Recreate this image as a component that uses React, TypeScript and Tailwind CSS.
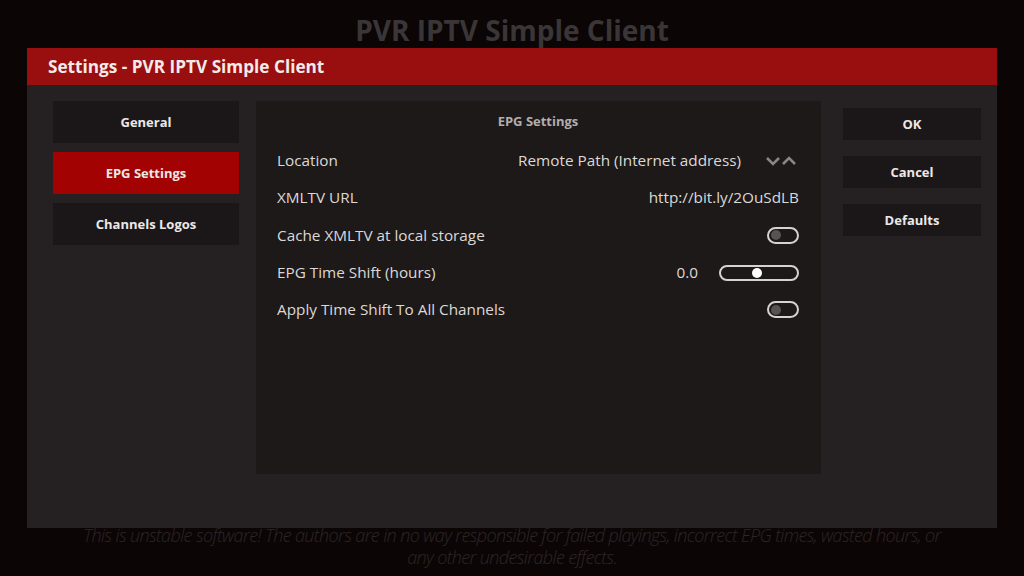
import { useState } from 'react'

type Row = {
  label: string
  kind: 'select' | 'text' | 'toggle' | 'slider'
  value?: string
  on?: boolean
}

const categories = ['General', 'EPG Settings', 'Channels Logos']

const rows: Row[] = [
  { label: 'Location', kind: 'select', value: 'Remote Path (Internet address)' },
  { label: 'XMLTV URL', kind: 'text', value: 'http://bit.ly/2OuSdLB' },
  { label: 'Cache XMLTV at local storage', kind: 'toggle', on: false },
  { label: 'EPG Time Shift (hours)', kind: 'slider', value: '0.0' },
  { label: 'Apply Time Shift To All Channels', kind: 'toggle', on: false },
]

function Toggle({ on }: { on?: boolean }) {
  return (
    <div className="flex h-[17px] w-[32px] items-center rounded-full border-2 border-[#d6d2d2] px-[2px]">
      <div className={`h-[10px] w-[10px] rounded-full ${on ? 'ml-auto bg-white' : 'bg-[#575253]'}`} />
    </div>
  )
}

function Slider() {
  return (
    <div className="flex h-[16px] w-[80px] items-center rounded-full border-2 border-[#d6d2d2]">
      <div className="ml-[31px] h-[10px] w-[10px] rounded-full bg-white" />
    </div>
  )
}

function Spinner() {
  // down / up arrows next to a select value
  return (
    <svg width="34" height="12" viewBox="0 0 34 12" className="ml-[24px]">
      <path d="M2 3 L8 9 L14 3" fill="none" stroke="#8a8586" strokeWidth="2.6" strokeLinejoin="miter" />
      <path d="M18 9 L24 3 L30 9" fill="none" stroke="#8a8586" strokeWidth="2.6" strokeLinejoin="miter" />
    </svg>
  )
}

export default function App() {
  const [active, setActive] = useState(1)

  return (
    <div
      className="flex h-[576px] w-[1024px] flex-col items-center overflow-hidden bg-[#0b0506]"
      style={{ fontFamily: '"Open Sans", "Noto Sans", sans-serif' }}
    >
      <h1 className="flex h-[48px] items-center pt-[12px] text-[28px] font-bold text-[#3a3637]">
        PVR IPTV Simple Client
      </h1>

      <div className="w-[970px]">
        {/* dialog header */}
        <div className="flex h-[37px] items-center bg-[#990e0e] pl-[21px] text-[17.2px] font-bold text-[#f3eaea]">
          Settings - PVR IPTV Simple Client
        </div>

        {/* dialog body */}
        <div className="flex h-[443px] gap-[17px] bg-[#252122] pl-[26px] pr-[16px] pt-[16px]">
          <div className="flex w-[186px] flex-col gap-[9px]">
            {categories.map((c, i) => (
              <button
                key={c}
                onClick={() => setActive(i)}
                className={`flex h-[42px] items-center justify-center pt-[2px] text-[13px] font-bold text-[#ece8e8] ${
                  i === active ? 'bg-[#a20202]' : 'bg-[#1b1718]'
                }`}
              >
                {c}
              </button>
            ))}
          </div>

          <div className="flex h-[373px] w-[565px] flex-col bg-[#1d1919] px-[21px] pr-[22px]">
            <div className="flex h-[41px] items-center justify-center pt-[1px] text-[13px] font-bold text-[#b3adae]">
              EPG Settings
            </div>
            <div className="flex flex-col">
              {rows.map((r) => (
                <div key={r.label} className="flex h-[37.3px] items-center text-[15.3px] text-[#dcd8d8]">
                  <span>{r.label}</span>
                  <div className="ml-auto flex items-center">
                    {r.kind === 'select' && (
                      <>
                        <span>{r.value}</span>
                        <Spinner />
                      </>
                    )}
                    {r.kind === 'text' && <span>{r.value}</span>}
                    {r.kind === 'toggle' && <Toggle on={r.on} />}
                    {r.kind === 'slider' && (
                      <>
                        <span className="mr-[21px]">{r.value}</span>
                        <Slider />
                      </>
                    )}
                  </div>
                </div>
              ))}
            </div>
          </div>

          <div className="ml-[5px] flex w-[138px] flex-col gap-[16px] pt-[7px]">
            {['OK', 'Cancel', 'Defaults'].map((b) => (
              <button
                key={b}
                className="flex h-[32px] items-center justify-center bg-[#1b1718] pt-[2px] text-[13px] font-bold text-[#ece8e8]"
              >
                {b}
              </button>
            ))}
          </div>
        </div>
      </div>

      <p className="mt-[-4px] w-[872px] text-center text-[18px] leading-[22px] font-light italic tracking-[-0.035em] text-[#2e2627]">
        This is unstable software! The authors are in no way responsible for failed playings, incorrect EPG times, wasted hours, or any other undesirable effects.
      </p>
    </div>
  )
}
